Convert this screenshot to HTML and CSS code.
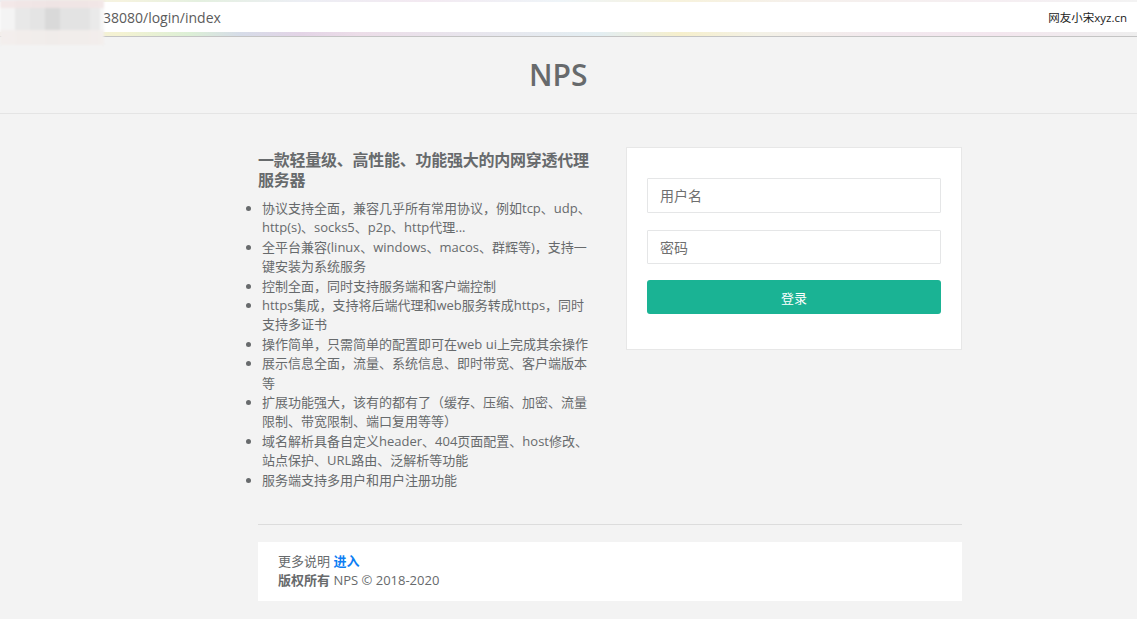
FILE: index.html
```html
<!DOCTYPE html>
<html lang="zh-CN">
<head>
<meta charset="utf-8">
<title>NPS</title>
<link rel="stylesheet" href="styles.css">
</head>
<body>
<div class="browser-bar">
  <div class="blur"></div>
  <span class="url">38080/login/index</span>
  <span class="watermark">网友小宋xyz.cn</span>
</div>
<header class="page-header"><h1 class="brand">NPS</h1></header>
<main class="login-columns">
  <div class="row">
    <section class="intro">
      <h3 class="intro-title">一款轻量级、高性能、功能强大的内网穿透代理服务器</h3>
      <ul class="features">
        <li>协议支持全面，兼容几乎所有常用协议，例如tcp、udp、http(s)、socks5、p2p、http代理...</li>
        <li>全平台兼容(linux、windows、macos、群辉等)，支持一键安装为系统服务</li>
        <li>控制全面，同时支持服务端和客户端控制</li>
        <li>https集成，支持将后端代理和web服务转成https，同时支持多证书</li>
        <li>操作简单，只需简单的配置即可在web ui上完成其余操作</li>
        <li>展示信息全面，流量、系统信息、即时带宽、客户端版本等</li>
        <li>扩展功能强大，该有的都有了（缓存、压缩、加密、流量限制、带宽限制、端口复用等等）</li>
        <li>域名解析具备自定义header、404页面配置、host修改、站点保护、URL路由、泛解析等功能</li>
        <li>服务端支持多用户和用户注册功能</li>
      </ul>
    </section>
    <div class="card">
      <form class="login-form">
        <input class="form-control" type="text" placeholder="用户名">
        <input class="form-control" type="password" placeholder="密码">
        <button class="btn-primary" type="button">登录</button>
      </form>
    </div>
  </div>
  <hr class="divider">
  <footer class="footer">
    <div>更多说明 <a class="link" href="#">进入</a></div>
    <div><strong>版权所有</strong> NPS © 2018-2020</div>
  </footer>
</main>
</body>
</html>
```
FILE: styles.css
```css
* { box-sizing: border-box; }
html, body { margin: 0; padding: 0; }
body {
  background: #f3f3f3;
  color: #676a6c;
  font-family: "Open Sans", "Noto Sans CJK SC", sans-serif;
  font-size: 13px;
  overflow: hidden;
}

/* browser address bar (part of the screenshot) */
.browser-bar {
  position: relative;
  height: 37px;
  display: flex;
  align-items: center;
  padding: 0 10px 2px 103px;
  border-bottom: 1px solid #c4c4c4;
  background:
    linear-gradient(90deg, #e9f2f8 0, #f6f3df 120px, #e4f0e0 200px, #eceef4 300px, #f3e9f1 420px, #eef4f8 560px, #f7f2dc 680px, #f5f0ec 800px, #f5eef2 1000px, #f3f3f3 1137px) top / 100% 2px no-repeat,
    linear-gradient(90deg, #f3ece6 0, #f4f2d2 120px, #dcefd6 190px, #d6dce8 240px, #e3d4e6 300px, #ecdde8 360px, #e3eef2 600px, #f6efcc 680px, #f3f1e6 760px, #f2e8ee 880px, #f3e6ee 1000px, #eeeeee 1137px) bottom / 100% 4px no-repeat,
    #ffffff;
}
.blur {
  position: absolute;
  left: 0;
  top: 0;
  width: 104px;
  height: 45px;
  background:
    linear-gradient(to bottom, rgba(243, 230, 230, 0.85) 0 8px, rgba(0,0,0,0) 8px 30px, rgba(243, 238, 236, 0.9) 30px 45px),
    linear-gradient(90deg, #f4f4f4 0 15px, #e8e8e8 15px 30px, #e4e4e4 30px 45px, #d9d9d9 45px 60px, #e3e3e3 60px 90px, #eaeaea 90px 100px, #f6f6f6 100px);
  filter: blur(1px);
}
.url {
  font-size: 14px;
  color: #5b5b5b;
  margin-right: auto;
}
.watermark {
  font-size: 11.5px;
  color: #222;
}

/* page header */
.page-header {
  height: 77px;
  display: flex;
  align-items: center;
  padding-left: 529px;
  border-bottom: 1px solid #e4e4e4;
}
.brand {
  margin: 0;
  font-size: 30px;
  font-weight: 600;
  color: #676a6c;
  line-height: 1;
}

/* main */
.login-columns {
  width: 704px;
  margin: 33px 0 0 258px;
}
.row {
  display: flex;
  justify-content: space-between;
  align-items: flex-start;
}
.intro {
  width: 335px;
}
.intro-title {
  margin: 0;
  padding-top: 3px;
  font-size: 16px;
  letter-spacing: -0.25px;
  line-height: 20px;
  font-weight: 700;
  color: #676a6c;
}
.features {
  margin: 9px 0 0;
  padding-left: 4px;
  line-height: 19.4px;
}

.card {
  width: 336px;
  flex: none;
  background: #fff;
  border: 1px solid #e7e7e7;
  padding: 30px 20px 35px;
}
.login-form {
  display: flex;
  flex-direction: column;
  margin: 0;
}
.form-control {
  height: 35px;
  border: 1px solid #e5e6e7;
  border-radius: 1px;
  padding: 0 12px;
  font-family: "Open Sans", "Noto Sans CJK SC", sans-serif;
  font-size: 14px;
  color: #555;
  background: #fff;
  margin-bottom: 17px;
  outline: none;
}
.form-control + .form-control { height: 34px; margin-bottom: 16px; }
.form-control::placeholder { color: #6f6f6f; }
.btn-primary {
  height: 34px;
  border: 0;
  border-radius: 3px;
  background: #1ab394;
  color: #fff;
  font-family: "Open Sans", "Noto Sans CJK SC", sans-serif;
  font-size: 13px;
}

.divider {
  border: 0;
  border-top: 1px solid #dcdcdc;
  margin: 34px 0 17px;
}
.footer {
  background: #fff;
  padding: 10px 20px 11px;
  line-height: 19px;
  color: #676a6c;
}
.footer strong { font-weight: 700; }
.link {
  color: #0d7ef3;
  font-weight: 700;
  text-decoration: none;
}
```
